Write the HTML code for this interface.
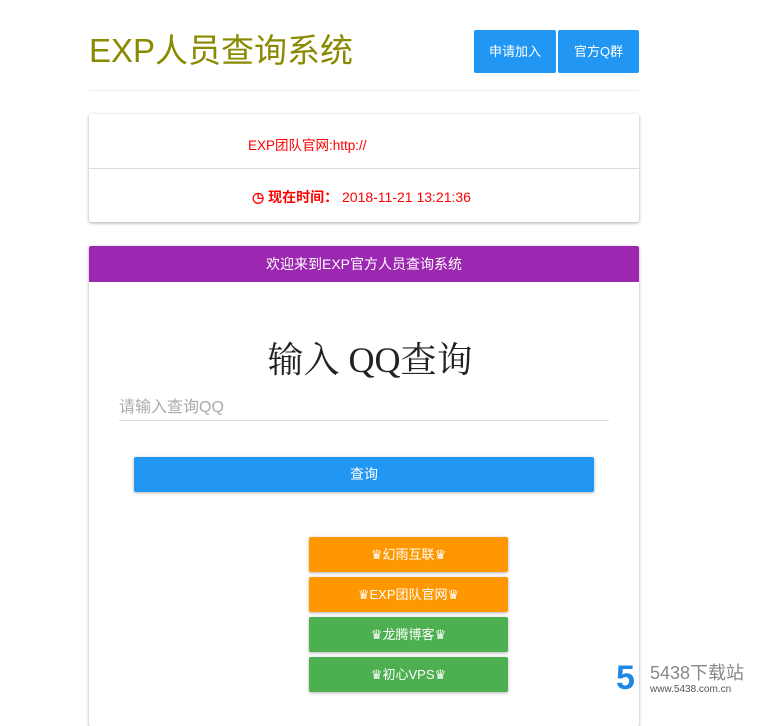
<!DOCTYPE html>
<html><head><meta charset="utf-8"><style>
body{margin:0;background:#fff;font-family:"Liberation Sans","Noto Sans CJK SC",sans-serif;width:773px;height:705px;overflow:hidden;position:relative}
.a{position:absolute}
.title{left:89px;top:29px;font-size:33px;color:#8a8a00;line-height:44px}
.btn{background:#2196f3;color:#fff;font-size:13px;text-align:center;line-height:43px;border-radius:2px;top:30px;height:43px}
.card{left:89px;width:550px;box-shadow:0 1px 3px rgba(0,0,0,.35);border-radius:2px;background:#fff}
.red{color:#f00;font-size:13.5px}
.lb{left:309px;width:199px;height:35px;line-height:35px;color:#fff;font-size:13px;text-align:center;border-radius:2px;box-shadow:0 1px 3px rgba(0,0,0,.3)}
</style></head><body>
<div class="a title">EXP人员查询系统</div>
<div class="a btn" style="left:474px;width:82px">申请加入</div>
<div class="a btn" style="left:558px;width:81px">官方Q群</div>
<div class="a" style="left:89px;top:90px;width:550px;height:1px;background:#eee"></div>
<div class="a card" style="top:114px;height:108px"></div>
<div class="a" style="left:89px;top:168px;width:550px;height:1px;background:#ddd"></div>
<div class="a red" style="left:248px;top:134px">EXP团队官网:http://</div>
<div class="a red" style="left:252px;top:187px;font-size:14px"><b>&#9719; 现在时间：</b> 2018-11-21 13:21:36</div>
<div class="a card" style="top:246px;height:480px"></div>
<div class="a" style="left:89px;top:246px;width:550px;height:36px;background:#9c27b0;color:#fff;font-size:14px;text-align:center;line-height:36px;border-radius:2px 2px 0 0">欢迎来到EXP官方人员查询系统</div>
<div class="a" style="left:95px;top:332px;width:550px;text-align:center;font-family:'Liberation Serif','Noto Serif CJK SC',serif;font-size:36px;color:#222">输入 QQ查询</div>
<div class="a" style="left:119px;top:393px;font-size:16px;color:#aaa">请输入查询QQ</div>
<div class="a" style="left:119px;top:420px;width:490px;height:1px;background:#ddd"></div>
<div class="a" style="left:134px;top:457px;width:460px;height:35px;background:#2196f3;color:#fff;text-align:center;line-height:35px;font-size:14px;border-radius:2px;box-shadow:0 1px 3px rgba(0,0,0,.3)">查询</div>
<div class="a lb" style="top:537px;background:#ff9800">♛幻雨互联♛</div>
<div class="a lb" style="top:577px;background:#ff9800">♛EXP团队官网♛</div>
<div class="a lb" style="top:617px;background:#4caf50">♛龙腾博客♛</div>
<div class="a lb" style="top:657px;background:#4caf50">♛初心VPS♛</div>
<div class="a" style="left:616px;top:660px;font-size:34px;line-height:36px;font-weight:bold;color:#1e88e5">5</div>
<div class="a" style="left:650px;top:662px;font-size:18px;line-height:22px;color:#888">5438下载站</div>
<div class="a" style="left:650px;top:684px;font-size:10px;line-height:12px;color:#555">www.5438.com.cn</div>
</body></html>
